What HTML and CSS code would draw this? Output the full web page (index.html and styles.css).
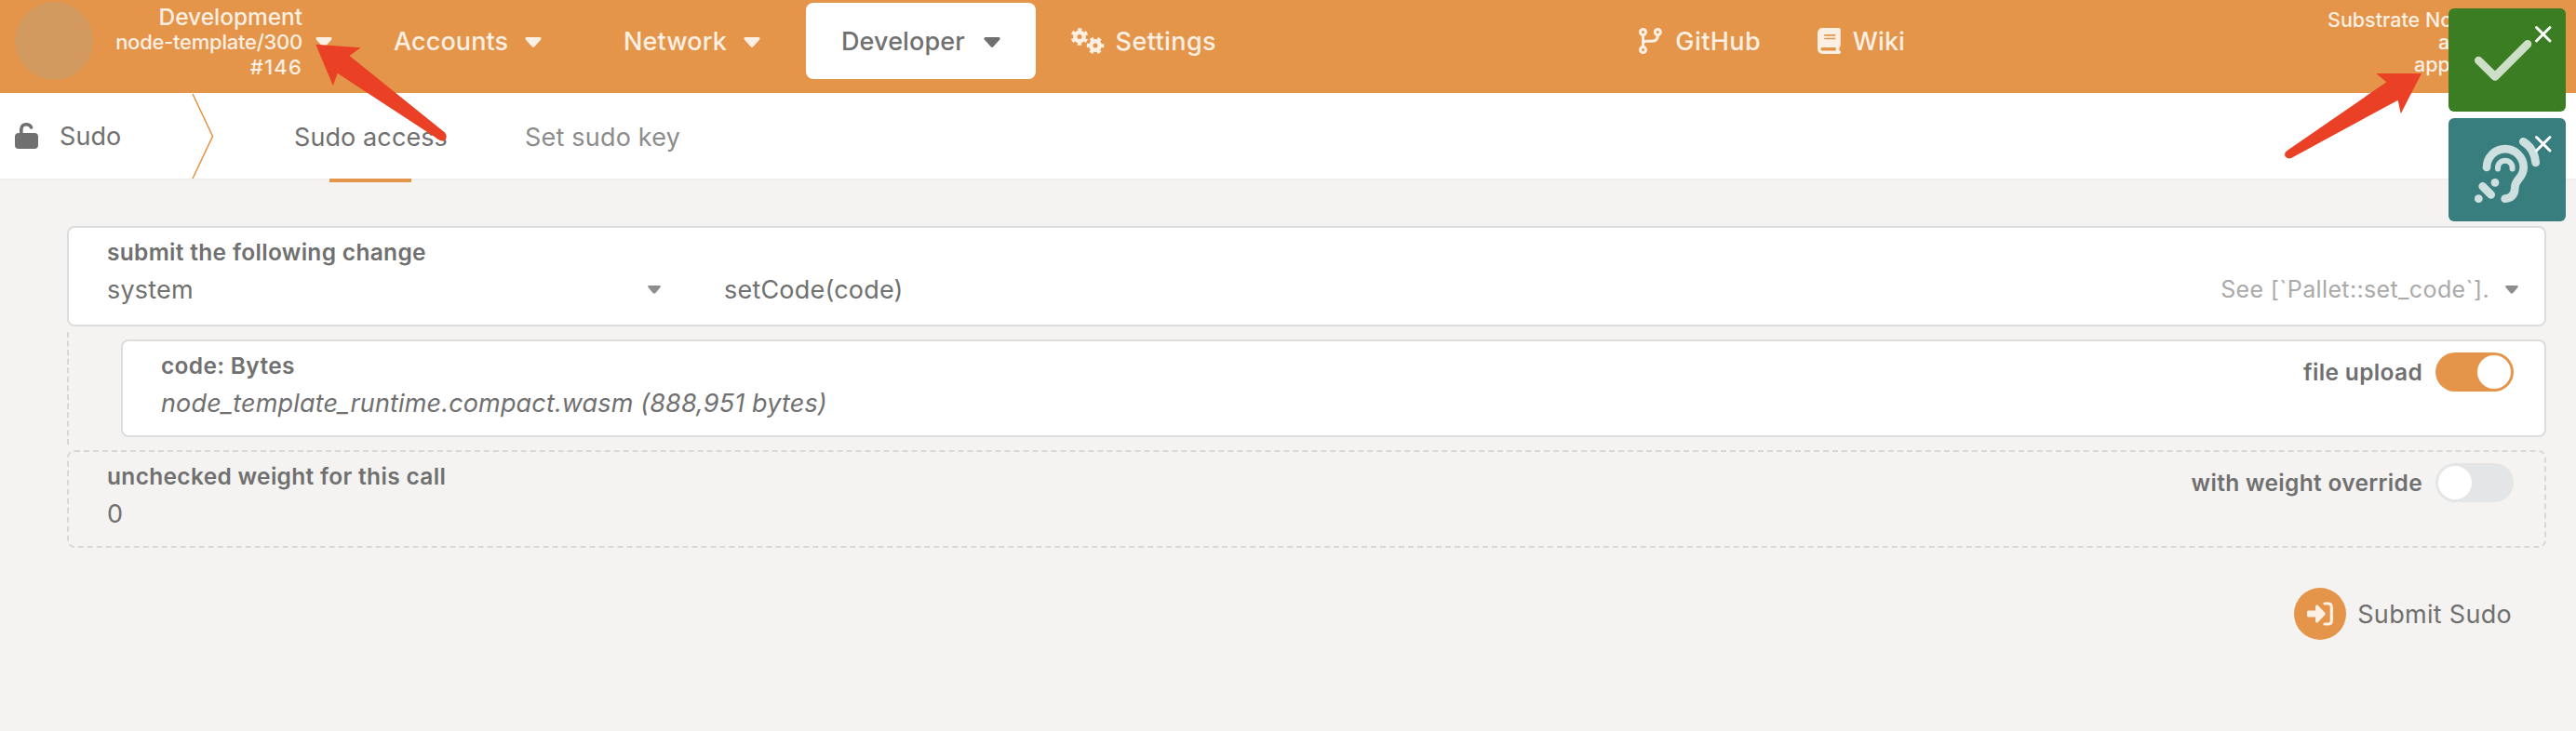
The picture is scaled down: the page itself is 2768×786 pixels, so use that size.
FILE: index.html
```html
<!DOCTYPE html>
<html lang="en">
<head>
<meta charset="utf-8">
<title>Sudo</title>
<link rel="stylesheet" href="styles.css">
</head>
<body>
<header class="topbar">
  <div class="logo"></div>
  <div class="chain">
    <div class="chain-name">Development</div>
    <div class="chain-spec">node-template/300</div>
    <div class="chain-block">#146</div>
  </div>
  <svg class="caret caret-chain" viewBox="0 0 18 11"><path d="M1.500 0h15q2 .8 .8 2.400l-7 7.800q-1.300 1.200-2.600 0l-7-7.800q-1.200-1.600 .8-2.400z"/></svg>
  <nav class="menu">
    <div class="item accounts"><span class="name">Accounts</span><svg class="caret" viewBox="0 0 18 11"><path d="M1.500 0h15q2 .8 .8 2.400l-7 7.800q-1.300 1.200-2.600 0l-7-7.800q-1.200-1.600 .8-2.400z"/></svg></div>
    <div class="item network"><span class="name">Network</span><svg class="caret" viewBox="0 0 18 11"><path d="M1.500 0h15q2 .8 .8 2.400l-7 7.800q-1.300 1.200-2.600 0l-7-7.800q-1.200-1.600 .8-2.400z"/></svg></div>
    <div class="item developer"><span class="name">Developer</span><svg class="caret" viewBox="0 0 18 11"><path d="M1.500 0h15q2 .8 .8 2.400l-7 7.800q-1.300 1.200-2.600 0l-7-7.800q-1.200-1.600 .8-2.400z"/></svg></div>
    <div class="item settings">
      <svg class="gears" viewBox="0 0 35 28">
        <g fill="none" stroke="currentColor"><circle cx="9" cy="9.500" r="4.700" stroke-width="4.400"/><circle cx="9" cy="9.500" r="7.600" stroke-width="3.400" stroke-dasharray="4 3.960" stroke-dashoffset="2" transform="rotate(30 9 9.500)"/>
        <circle cx="26" cy="19" r="4.700" stroke-width="4.400"/><circle cx="26" cy="19" r="7.600" stroke-width="3.400" stroke-dasharray="4 3.960" stroke-dashoffset="2"/></g>
      </svg><span class="name wide">Settings</span></div>
  </nav>
  <nav class="links">
    <div class="item github">
      <svg class="glyph" viewBox="0 0 25 28" fill="none" stroke="currentColor" stroke-width="3"><circle cx="4.500" cy="4.500" r="3"/><circle cx="20.300" cy="4.500" r="3"/><circle cx="4.500" cy="23.500" r="3"/><path d="M4.500 7.500v13M4.500 16.500q1-2.300 4-2.300h5.500q6.300 0 6.300-6.500"/></svg><span class="name wide">GitHub</span></div>
    <div class="item wiki">
      <svg class="glyph" viewBox="0 0 25 28"><path fill="currentColor" fill-rule="evenodd" d="M5.500 0H23a1.700 1.700 0 0 1 1.700 1.700v17.400a1.700 1.700 0 0 1-1.200 1.600v3.900a1.700 1.700 0 0 1-.5 3.400H5.500A5.300 5.300 0 0 1 0 22.700V5.300A5.300 5.300 0 0 1 5.500 0zM5.200 21a1.700 1.700 0 0 0 0 3.500h14.500V21zM7.200 7v1.700h12V7zm0 3.800v1.500h12v-1.500z"/></svg><span class="name">Wiki</span></div>
  </nav>
  <div class="versions"><div>Substrate Node</div><div class="v-api">api</div><div class="v-apps">apps</div></div>
</header>

<section class="tabs">
  <svg class="lock" viewBox="0 0 25 28"><rect y="11" width="25" height="17" rx="4" fill="currentColor"/><path d="M6.800 12V7.500Q6.800 1.800 12.300 1.800q3.600 0 5.300 3.200" fill="none" stroke="currentColor" stroke-width="3.600" stroke-linecap="round"/></svg>
  <div class="tab-title">Sudo</div>
  <svg class="divider" viewBox="0 0 24 92"><path d="M1 1l21.500 45.500L1 92" fill="none" stroke="#e49549" stroke-width="1.600"/></svg>
  <div class="tab active">Sudo access</div>
  <div class="tab second">Set sudo key</div>
</section>

<main class="content">
  <div class="box call">
    <div class="label">submit the following change</div>
    <div class="row">
      <div class="section-select"><span class="value">system</span><svg class="small-caret" viewBox="0 0 14 9"><path d="M1 0h12q1.600.5.500 1.900L8.400 8q-1.400 1.100-2.800 0L.5 1.900Q-.6.500 1 0z"/></svg></div>
      <div class="method value">setCode(code)</div>
      <div class="hint">See [`Pallet::set_code`].</div>
      <svg class="small-caret" viewBox="0 0 14 9"><path d="M1 0h12q1.600.5.500 1.900L8.400 8q-1.400 1.100-2.800 0L.5 1.900Q-.6.500 1 0z"/></svg>
    </div>
  </div>
  <div class="params">
    <div class="box param">
      <div class="field">
        <div class="label">code: Bytes</div>
        <div class="file">node_template_runtime.compact.wasm (888,951 bytes)</div>
      </div>
      <div class="switch"><span class="label">file upload</span><i class="toggle on"></i></div>
    </div>
  </div>
  <div class="box weight">
    <div class="field">
      <div class="label">unchecked weight for this call</div>
      <div class="zero">0</div>
    </div>
    <div class="switch"><span class="label">with weight override</span><i class="toggle"></i></div>
  </div>
  <div class="actions">
    <span class="submit-icon"><svg viewBox="0 0 28 26"><path fill="currentColor" d="M1.500 9.500H9V5q.5-2.400 2.600-1.200l7.600 8q1 1.200 0 2.400l-7.600 8Q9.500 23.400 9 21v-4.500H1.500Q0 16.500 0 15v-4Q0 9.500 1.500 9.500z"/><path d="M19 2h3.500q3.800 0 3.800 3.800v14.400q0 3.800-3.800 3.800H19" fill="none" stroke="currentColor" stroke-width="3.200" stroke-linecap="round"/></svg></span>
    <span class="submit-text">Submit Sudo</span>
  </div>
</main>

<svg class="arrow arrow-left" viewBox="339 47 146 108"><path d="M339.300 47.700L387.500 51.300L375.600 60L478 142.500Q481 147 478.500 150.500Q475 153 471 149.800L362.600 78.700L357.900 92.300z"/></svg>
<svg class="arrow arrow-right" viewBox="2454 78 149 94"><path d="M2602 79L2579.700 122.300L2576.700 107.700L2462.500 169.700Q2458 171.800 2455.500 168Q2454 164.500 2457.500 162L2564.300 88.300L2553.300 79z"/></svg>

<aside class="toasts">
  <div class="toast ok"><svg viewBox="0 0 126 111"><path d="M32.300 56L50 73.300L85 38.300" fill="none" stroke="#cedfc8" stroke-width="8.700" stroke-linecap="round" stroke-linejoin="round"/><path class="x" d="M94.500 20.500l14.500 14.500M109 20.500L94.500 35"/></svg></div>
  <div class="toast info"><svg viewBox="0 0 126 111"><g fill="none" stroke="#cedfdf" stroke-width="8.700" stroke-linecap="round"><path d="M41 53A19.700 19.700 0 0 1 80.700 53C80.700 65 71.300 65 71.300 75Q71 86 60.700 86.700"/><path d="M53 54.500V53.500a7.800 7.800 0 0 1 15.600 0V54.500" stroke-width="6"/><path d="M80.300 25.300Q92.500 33 93.700 48M36.700 73.300L45.700 82.300"/></g><g fill="#cedfdf"><circle cx="50" cy="69.300" r="4.400"/><circle cx="32.300" cy="86.700" r="4.400"/></g><path class="x" d="M94.500 20.500l14.500 14.500M109 20.500L94.500 35"/></svg></div>
</aside>
</body>
</html>
```

FILE: styles.css
```css
* { box-sizing: border-box; }
body { margin: 0; height: 786px; overflow: hidden; background: #f4f3f1; color: #707070; font: 27px/34px Inter, sans-serif; letter-spacing: .1px; white-space: nowrap; }
svg { display: block; flex: none; overflow: visible; }
i { display: block; }
.topbar { display: flex; height: 100px; background: #e49549; color: #fcefe3; font-weight: 450; }
.logo { flex: none; width: 84px; height: 84px; margin: 2px 0 0 16px; border-radius: 50%; background: #d39a60; }
.chain { flex: none; width: 225px; padding-top: 5px; text-align: right; line-height: 26.500px; font-size: 22px; letter-spacing: -.25px; }
.chain-name { font-size: 24.500px; letter-spacing: -.05px; }
.chain-block { padding-top: 1px; letter-spacing: 1.200px; }
.caret { width: 18px; height: 11px; fill: currentColor; }
.caret-chain { margin: 40px 0 0 14px; }
.menu, .links { display: flex; flex: none; padding-top: 3px; }
.menu { margin-left: 28px; }
.item { display: flex; justify-content: space-between; align-items: center; height: 82px; }
.name { padding-top: 2px; }
.wide { letter-spacing: .4px; }
.item .caret { margin-top: 3px; }
.accounts { width: 235px; padding: 0 38px; }
.network { width: 223px; padding: 0 38px; margin-left: 12px; }
.developer { width: 247px; padding: 0 38px; margin-left: 11px; border-radius: 8px; background: #fff; color: #707070; }
.settings { width: 194px; padding: 0 0 0 38px; }
.gears { width: 35px; height: 28px; }
.links { margin-left: 454px; gap: 61px; }
.github { width: 131px; }
.wiki { width: 94px; }
.glyph { width: 25px; height: 28px; }
.versions { flex: none; width: 250px; margin-left: 454px; padding-top: 9px; line-height: 24px; font-size: 21.500px; letter-spacing: 0; }
.v-api { padding-left: 119px; }
.v-apps { padding-left: 93px; }

.tabs { display: flex; height: 94px; background: #fff; border-bottom: 2px solid #efeeec; line-height: 94px; }
.lock { width: 25px; height: 28px; margin: 32px 0 0 16px; }
.tab-title { width: 142px; margin-left: 23px; }
.divider { width: 24px; height: 92px; }
.tab { position: relative; height: 92px; line-height: 95px; }
.active { width: 164px; margin-left: 86px; }
.active::after { content: ""; position: absolute; left: 38px; bottom: -4px; width: 88px; height: 4px; background: #e49549; }
.second { margin-left: 84px; color: #8c8c8c; letter-spacing: .2px; }

.content { padding: 49px 32px 0 72px; }
.box { border: 2px solid #ddd; border-radius: 8px; background: #fff; }
.label { font-size: 24.500px; font-weight: 600; line-height: 31px; letter-spacing: .32px; }
.call { height: 108px; padding: 11px 28px 0 41px; }
.row { display: flex; align-items: center; height: 48px; }
.section-select { display: flex; justify-content: space-between; align-items: center; width: 595px; }
.value { padding-top: 2px; letter-spacing: .2px; }
.small-caret { width: 14px; height: 9px; fill: #8d8d8d; }
.method { flex: 1; margin-left: 68px; }
.hint { margin-right: 17px; color: #aaa; font-size: 25px; letter-spacing: .37px; }
.params { margin-top: 6px; padding: 8px 0 8px 56px; border-left: 2px dashed #d8d8d6; }
.param, .weight { display: flex; justify-content: space-between; height: 105px; padding: 11px 33px 0 41px; }
.weight { margin-top: 6px; border: 2px dashed #d8d8d6; background: transparent; }
.file { font-style: italic; line-height: 49px; letter-spacing: .15px; }
.zero { line-height: 49px; }
.switch { display: flex; align-items: center; gap: 14px; height: 42px; margin-top: 1px; }
.toggle { width: 84px; height: 42px; border-radius: 21px; padding: 3px; background: #e4e5e6; }
.toggle::after { content: ""; display: block; width: 36px; height: 36px; border-radius: 50%; background: #fff; }
.toggle.on { background: #e49549; }
.toggle.on::after { margin-left: 42px; }
.actions { display: flex; justify-content: flex-end; align-items: center; height: 56px; margin-top: 43px; padding-right: 37px; }
.submit-icon { display: flex; justify-content: center; align-items: center; width: 56px; height: 56px; margin-right: 12px; border-radius: 50%; background: #e49549; color: #fcefe3; }
.submit-icon svg { width: 28px; height: 26px; }
.submit-text { padding-top: 2px; letter-spacing: .3px; }

.arrow { position: absolute; fill: #ea4025; }
.arrow-left { left: 339px; top: 47px; width: 146px; height: 108px; }
.arrow-right { left: 2454px; top: 78px; width: 149px; height: 94px; }
.toasts { position: absolute; right: 11px; top: 9px; display: grid; gap: 7px; }
.toast { width: 126px; height: 111px; border-radius: 6px; }
.toast svg { width: 126px; height: 111px; }
.ok { background: #3a7d22; }
.info { background: #397e7f; }
.x { fill: none; stroke: #fff; stroke-width: 3; stroke-linecap: round; }
```
